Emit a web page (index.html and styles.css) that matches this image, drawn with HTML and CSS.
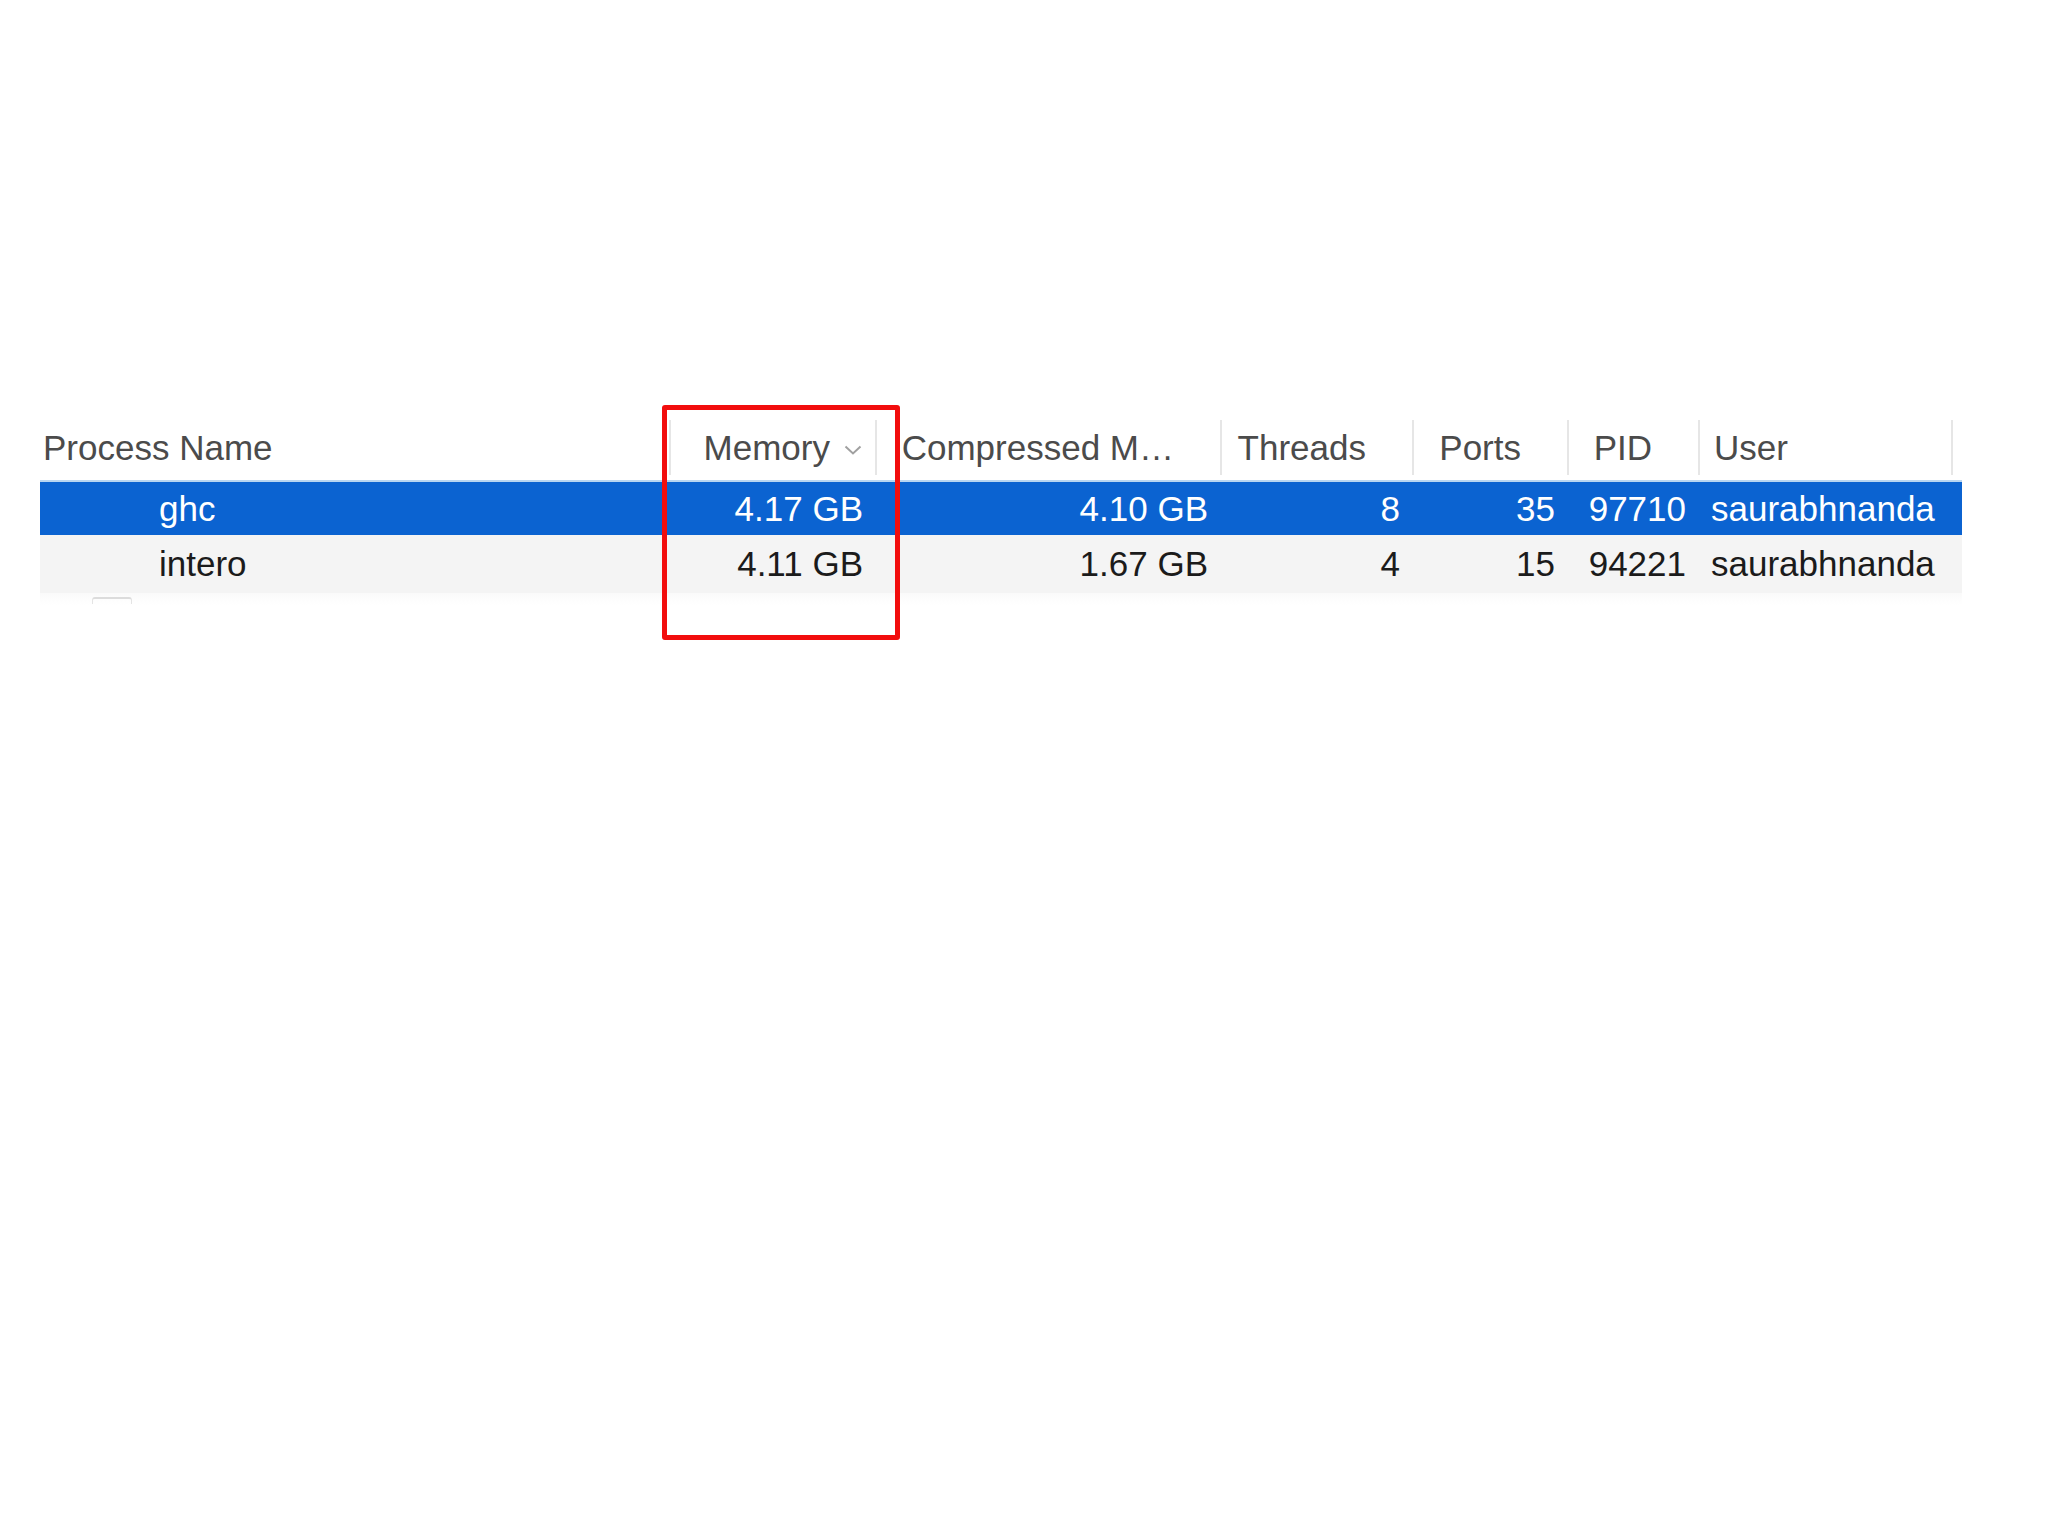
FILE: index.html
```html
<!DOCTYPE html>
<html lang="en">
<head>
<meta charset="utf-8">
<title>Activity Monitor – Memory</title>
<link rel="stylesheet" href="styles.css">
</head>
<body>
<div class="page">
  <div class="table">
    <div class="header">
      <div class="hcell name">Process Name</div>
      <div class="hcell num sorted sep"><span>Memory</span><svg class="chev" viewBox="0 0 18 10" width="18" height="10"><path d="M1.5 1.5 L9 8.5 L16.5 1.5" fill="none" stroke="#a0a0a0" stroke-width="2"/></svg></div>
      <div class="hcell num sep">Compressed M…</div>
      <div class="hcell num sep">Threads</div>
      <div class="hcell num sep">Ports</div>
      <div class="hcell num sep">PID</div>
      <div class="hcell user sep">User</div>
      <div class="hcell filler sep"></div>
    </div>
    <div class="row selected">
      <div class="cell name">ghc</div>
      <div class="cell num">4.17 GB</div>
      <div class="cell num">4.10 GB</div>
      <div class="cell num">8</div>
      <div class="cell num">35</div>
      <div class="cell num">97710</div>
      <div class="cell user">saurabhnanda</div>
      <div class="cell filler"></div>
    </div>
    <div class="row alt">
      <div class="cell name">intero</div>
      <div class="cell num">4.11 GB</div>
      <div class="cell num">1.67 GB</div>
      <div class="cell num">4</div>
      <div class="cell num">15</div>
      <div class="cell num">94221</div>
      <div class="cell user">saurabhnanda</div>
      <div class="cell filler"></div>
    </div>
    <div class="ghost"><span class="ghost-icon"></span></div>
  </div>
  <div class="highlight"></div>
</div>
</body>
</html>
```
FILE: styles.css
```css
html, body {
  margin: 0;
  padding: 0;
  background: #ffffff;
}

body {
  font-family: "Liberation Sans", Arial, sans-serif;
  font-size: 35px;
  width: 2048px;
  height: 1536px;
  overflow: hidden;
}

.page {
  position: relative;
  padding: 420px 0 0 40px;
}

.table {
  width: 1922px;
}

.header,
.row {
  display: grid;
  grid-template-columns: 629px 206px 345px 192px 155px 131px 253px 11px;
}

.header {
  padding-bottom: 5px;
  border-bottom: 2px solid #b9d6f1;
}

.hcell {
  height: 55px;
  display: flex;
  align-items: center;
  color: #4b4b4b;
  white-space: nowrap;
  overflow: hidden;
  box-sizing: border-box;
}

.hcell.sep {
  border-left: 2px solid #e6e6e6;
}

.hcell.name {
  padding-left: 3px;
}

.hcell.num {
  justify-content: flex-end;
  padding-right: 46px;
}

.hcell.sorted {
  padding-right: 13px;
  gap: 14px;
}

.chev {
  display: block;
  margin-top: 4px;
}

.hcell.user {
  padding-left: 14px;
}

.row {
  color: #1b1b1b;
}

.row.selected {
  background: #0b63d1;
  color: #ffffff;
  height: 53px;
}

.row.alt {
  background: #f4f4f4;
  height: 58px;
}

.cell {
  display: flex;
  align-items: center;
  white-space: nowrap;
  box-sizing: border-box;
}

.cell.name {
  padding-left: 119px;
}

.cell.num {
  justify-content: flex-end;
  padding-right: 12px;
}

.cell.user {
  padding-left: 13px;
}

.ghost {
  height: 12px;
  background: linear-gradient(#fafafa, #ffffff);
  display: flex;
  align-items: flex-start;
}

.ghost-icon {
  display: block;
  width: 38px;
  height: 5px;
  margin: 4px 0 0 52px;
  border-top: 2px solid #dcdcdc;
  border-left: 1px solid #e4e4e4;
  border-right: 1px solid #e4e4e4;
  border-radius: 3px 3px 0 0;
}

.highlight {
  position: absolute;
  left: 662px;
  top: 405px;
  width: 238px;
  height: 235px;
  box-sizing: border-box;
  border: 5px solid #f20d0d;
  border-radius: 3px;
}
```
